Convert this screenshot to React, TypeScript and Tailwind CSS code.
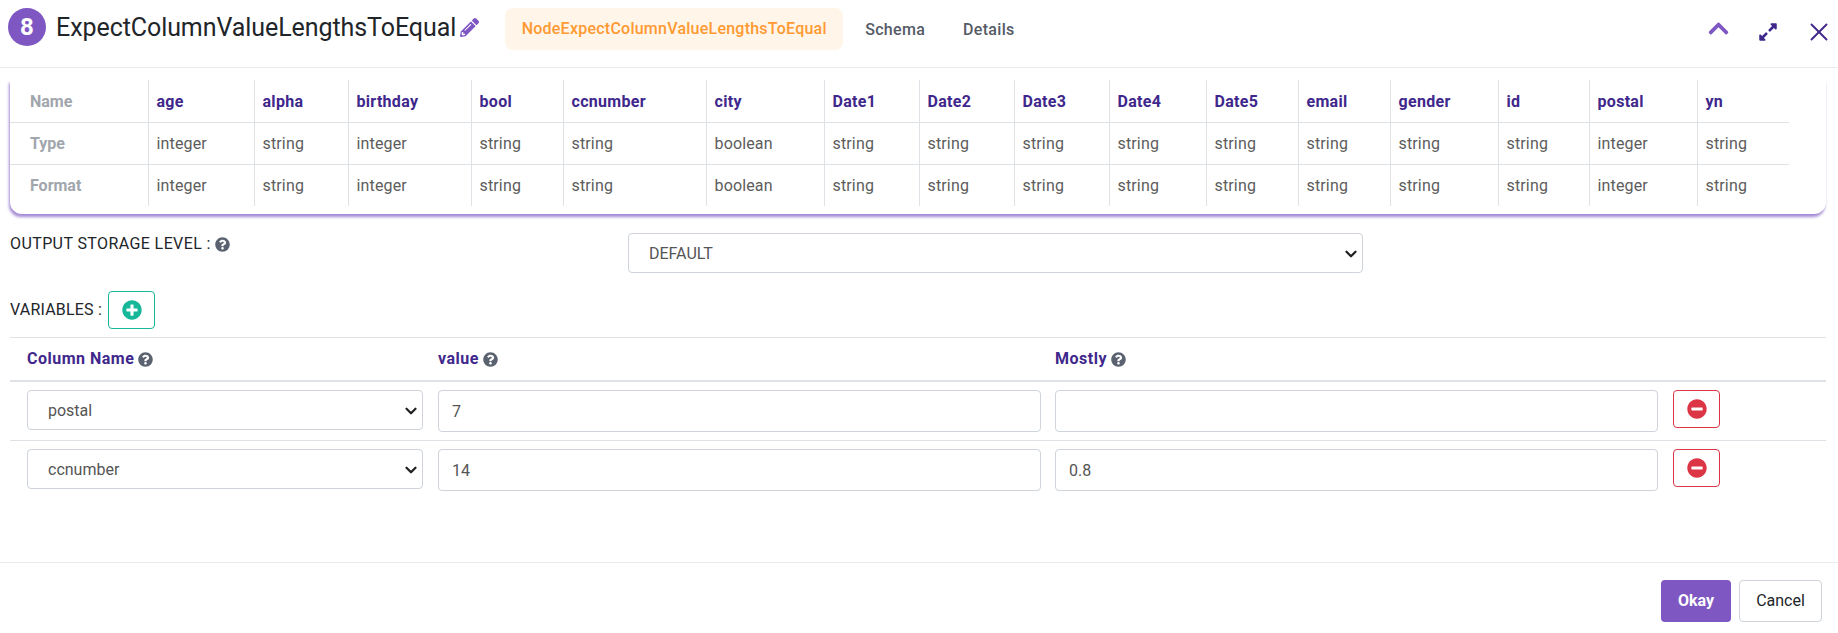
import React from "react";
import { FaChevronUp, FaExpandAlt, FaMinusCircle, FaPencilAlt, FaPlusCircle, FaQuestionCircle } from "react-icons/fa";
import { ChevronDown, X } from "lucide-react";

const columns = [
  { name: "age", type: "integer", width: "w-[106px]" },
  { name: "alpha", type: "string", width: "w-[94px]" },
  { name: "birthday", type: "integer", width: "w-[123px]" },
  { name: "bool", type: "string", width: "w-[92px]" },
  { name: "ccnumber", type: "string", width: "w-[143px]" },
  { name: "city", type: "boolean", width: "w-[118px]" },
  { name: "Date1", type: "string", width: "w-[95px]" },
  { name: "Date2", type: "string", width: "w-[95px]" },
  { name: "Date3", type: "string", width: "w-[95px]" },
  { name: "Date4", type: "string", width: "w-[97px]" },
  { name: "Date5", type: "string", width: "w-[92px]" },
  { name: "email", type: "string", width: "w-[92px]" },
  { name: "gender", type: "string", width: "w-[108px]" },
  { name: "id", type: "string", width: "w-[91px]" },
  { name: "postal", type: "integer", width: "w-[108px]" },
  { name: "yn", type: "string", width: "w-[92px]" },
];

const rows = [
  { column: "postal", value: "7", mostly: "" },
  { column: "ccnumber", value: "14", mostly: "0.8" },
];

const Help = () => <FaQuestionCircle className="inline-block text-[15px] text-[#5a6270]" />;

const Select = ({ value, options, className }: { value: string; options: string[]; className: string }) => (
  <div className={`relative h-10 ${className}`}>
    <select
      defaultValue={value}
      className="h-full w-full appearance-none rounded border border-[#ced4da] bg-white pl-[20px] pr-8 pt-[2px] text-[16px] text-[#555]"
    >
      {options.map((o) => (
        <option key={o}>{o}</option>
      ))}
    </select>
    <ChevronDown className="pointer-events-none absolute right-[3px] top-[12px] h-[18px] w-[18px] text-[#222]" strokeWidth={3} />
  </div>
);

const SchemaTable = () => (
  <div className="mx-[10px] mt-3 w-[1816px] rounded-b-xl bg-white pb-2 shadow-[-1px_3px_3px_rgba(126,87,194,0.7)]">
    <table className="w-[1779px] table-fixed border-collapse text-[16px]">
      <thead>
        <tr className="h-[42px]">
          <th className="w-[138px] pl-[20px] pt-[2px] text-left font-bold text-[#a1a6ad]">Name</th>
          {columns.map((c) => (
            <th
              key={c.name}
              className={`${c.width} border-l border-[#dee2e6] pl-[8px] pt-[2px] text-left font-bold tracking-[0.3px] text-[#40278c]`}
            >
              {c.name}
            </th>
          ))}
        </tr>
      </thead>
      <tbody>
        {["Type", "Format"].map((label) => (
          <tr key={label} className="h-[42px] border-t border-[#dee2e6]">
            <td className="pl-[20px] pt-[2px] font-bold text-[#a1a6ad]">{label}</td>
            {columns.map((c) => (
              <td key={c.name} className="border-l border-[#dee2e6] pl-[8px] pt-[2px] tracking-[0.15px] text-[#5c5c5c]">
                {c.type}
              </td>
            ))}
          </tr>
        ))}
      </tbody>
    </table>
  </div>
);

const VariableRow = ({ column, value, mostly }: { column: string; value: string; mostly: string }) => (
  <div className="flex h-[58px] items-start gap-[15px] pl-[17px] pt-2 [&+&]:border-t [&+&]:border-[#dee2e6]">
    <Select value={column} options={["postal", "ccnumber"]} className="w-[396px]" />
    <input
      defaultValue={value}
      className="-mr-px h-[42px] w-[603px] rounded border border-[#ced4da] px-[13px] text-[16px] text-[#555]"
    />
    <input
      defaultValue={mostly}
      className="h-[42px] w-[603px] rounded border border-[#ced4da] px-[13px] text-[16px] text-[#555]"
    />
    <button className="flex h-[38px] w-[47px] items-center justify-center rounded border border-[#dc3545] bg-white">
      <FaMinusCircle className="text-[20px] text-[#dc3545]" />
    </button>
  </div>
);

export default function App() {
  return (
    <div className="flex h-[633px] w-[1838px] flex-col overflow-hidden bg-white font-['Roboto',sans-serif] text-[#212529]">
      <header className="flex h-[68px] shrink-0 items-center border-b border-[#e9ecef] pb-[10px] pl-2 pr-1">
        <div className="mb-[3px] flex h-[38px] w-[38px] items-center justify-center rounded-full bg-[#7e57c2] text-[24px] font-bold text-white">
          8
        </div>
        <h1 className="mb-[3px] ml-[10px] text-[25px] leading-none tracking-[-0.07px]">ExpectColumnValueLengthsToEqual</h1>
        <FaPencilAlt className="mb-[2px] ml-[4px] text-[19px] text-[#7e57c2]" />
        <nav className="ml-[26px] flex items-center text-[16px] font-medium">
          <span className="flex h-[42px] w-[338px] items-center justify-center rounded-lg bg-[#fff5e8] tracking-[0.24px] text-[#ff9a33]">
            NodeExpectColumnValueLengthsToEqual
          </span>
          <span className="ml-[22px] mt-[2px] tracking-[0.3px] text-[#555b66]">Schema</span>
          <span className="ml-[38px] mt-[2px] tracking-[0.3px] text-[#555b66]">Details</span>
        </nav>
        <div className="ml-auto flex items-center">
          <FaChevronUp className="mr-[-2px] text-[23px] text-[#7e57c2]" />
          <FaExpandAlt className="ml-[30px] mt-[6px] text-[20px] text-[#40278c]" />
          <X className="ml-[26px] mt-[6px] h-[30px] w-[30px] text-[#40278c]" strokeWidth={1.5} />
        </div>
      </header>

      <SchemaTable />

      <div className="mt-[19px] flex h-[40px] items-start pl-[10px] text-[16px]">
        <label className="-mt-px flex w-[618px] items-center gap-1 tracking-[0.4px]">
          OUTPUT STORAGE LEVEL : <Help />
        </label>
        <Select value="DEFAULT" options={["DEFAULT"]} className="w-[735px]" />
      </div>

      <div className="mt-[18px] flex h-[38px] items-center gap-[6px] pl-[10px] text-[16px]">
        <span className="tracking-[0.2px]">VARIABLES :</span>
        <button className="flex h-[38px] w-[47px] items-center justify-center rounded border border-[#17b899] bg-white">
          <FaPlusCircle className="text-[20px] text-[#17b899]" />
        </button>
      </div>

      <div className="ml-[10px] mt-2 w-[1816px] border-t border-[#dee2e6]">
        <div className="flex h-[44px] items-center border-b-2 border-[#dee2e6] pl-[17px] text-[16px] font-bold tracking-[0.5px] text-[#40278c]">
          <span className="flex w-[411px] items-center gap-1">
            Column Name <Help />
          </span>
          <span className="flex w-[617px] items-center gap-1">
            value <Help />
          </span>
          <span className="flex items-center gap-1">
            Mostly <Help />
          </span>
        </div>
        {rows.map((r, i) => (
          <VariableRow key={i} {...r} />
        ))}
      </div>

      <footer className="mt-auto flex h-[71px] shrink-0 items-start justify-end gap-2 border-t border-[#e9ecef] pr-4 pt-[17px] text-[16px]">
        <button className="h-[42px] w-[70px] rounded bg-[#7e57c2] font-bold text-white">Okay</button>
        <button className="h-[42px] w-[83px] rounded border border-[#ced4da] bg-white">Cancel</button>
      </footer>
    </div>
  );
}
